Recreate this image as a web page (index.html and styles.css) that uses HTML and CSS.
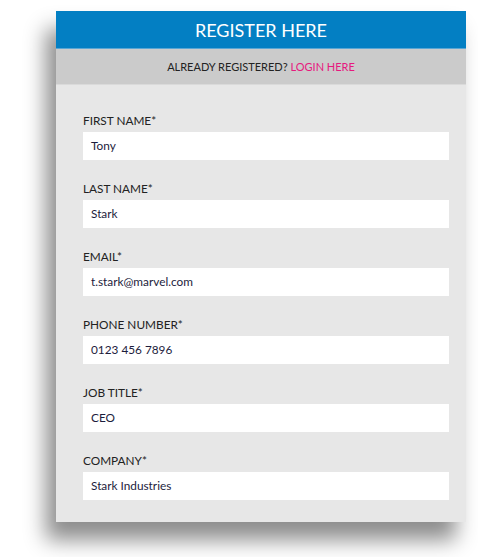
FILE: index.html
```html
<!DOCTYPE html>
<html>
<head>
<meta charset="utf-8">
<link rel="stylesheet" href="styles.css">
</head>
<body>
<div class="card">
  <div class="card-header">REGISTER HERE</div>
  <div class="card-sub">ALREADY REGISTERED? <a class="login" href="#">LOGIN HERE</a></div>
  <form class="form">
    <div class="field"><label class="label">FIRST NAME*</label><div class="input">Tony</div></div>
    <div class="field"><label class="label">LAST NAME*</label><div class="input">Stark</div></div>
    <div class="field"><label class="label">EMAIL*</label><div class="input">t.stark@marvel.com</div></div>
    <div class="field"><label class="label">PHONE NUMBER*</label><div class="input">0123 456 7896</div></div>
    <div class="field"><label class="label">JOB TITLE*</label><div class="input">CEO</div></div>
    <div class="field"><label class="label">COMPANY*</label><div class="input">Stark Industries</div></div>
  </form>
</div>
</body>
</html>
```

FILE: styles.css
```css
html, body {
  margin: 0;
  padding: 0;
  background: #ffffff;
}
body {
  font-family: "Lato", "Open Sans", sans-serif;
  width: 478px;
  height: 557px;
  overflow: hidden;
}
.card {
  margin: 11px 0 0 56px;
  width: 410px;
  background: #e7e7e7;
  box-shadow: -10px 18px 20px rgba(0, 0, 0, 0.45);
}
.card-header {
  height: 38px;
  background: #037fc3;
  color: #ffffff;
  font-size: 18px;
  line-height: 38px;
  text-align: center;
  border-bottom: 1px solid #5aa6d4;
  box-sizing: border-box;
}
.card-sub {
  height: 36px;
  background: #cbcbcb;
  color: #222222;
  font-size: 11px;
  line-height: 36px;
  text-align: center;
  border-bottom: 1px solid #dadada;
  box-sizing: border-box;
}
.login {
  color: #e6197e;
  text-decoration: none;
}
.form {
  display: flex;
  flex-direction: column;
  gap: 21px;
  padding: 28px 17px 22px 27px;
  margin: 0;
}
.field {
  display: flex;
  flex-direction: column;
}
.label {
  font-size: 11.8px;
  line-height: 16px;
  color: #222222;
  margin-bottom: 3px;
}
.input {
  height: 28px;
  background: #ffffff;
  font-size: 11.8px;
  line-height: 28px;
  color: #1c1c3c;
  padding: 0 8px;
}
```
